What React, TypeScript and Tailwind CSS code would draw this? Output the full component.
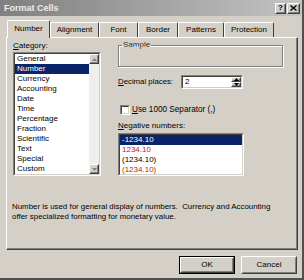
import React from "react";

const FONT = { fontFamily: '"Liberation Sans", Arial, sans-serif' };

function Sunken({ className = "", inner = "", children }: { className?: string; inner?: string; children?: React.ReactNode }) {
  return (
    <div className={`border border-t-[#808080] border-l-[#808080] border-b-white border-r-white ${className}`}>
      <div className={`h-full w-full border border-t-[#404040] border-l-[#404040] border-b-[#d4d0c8] border-r-[#d4d0c8] ${inner}`}>{children}</div>
    </div>
  );
}

function Raised({ className = "", children }: { className?: string; children?: React.ReactNode }) {
  return (
    <div className={`border border-t-white border-l-white border-b-[#404040] border-r-[#404040] bg-[#d4d0c8] ${className}`}>
      <div className="h-full w-full border border-t-[#d4d0c8] border-l-[#d4d0c8] border-b-[#808080] border-r-[#808080] flex items-center justify-center">
        {children}
      </div>
    </div>
  );
}

const Tri = ({ up, color = "#000" }: { up?: boolean; color?: string }) => (
  <svg width="5" height="3" viewBox="0 0 5 3">
    {up ? <path d="M2.5 0 L5 3 L0 3 Z" fill={color} /> : <path d="M0 0 L5 0 L2.5 3 Z" fill={color} />}
  </svg>
);

export default function App() {
  const tabs = [
    { t: "Number", w: 43 },
    { t: "Alignment", w: 49 },
    { t: "Font", w: 39 },
    { t: "Border", w: 40 },
    { t: "Patterns", w: 46 },
    { t: "Protection", w: 50 },
  ];
  const cats = ["General", "Number", "Currency", "Accounting", "Date", "Time", "Percentage", "Fraction", "Scientific", "Text", "Special", "Custom"];
  const negs = [
    { t: "-1234.10", c: "text-white bg-[#0a246a]" },
    { t: "1234.10", c: "text-[#c02020]" },
    { t: "(1234.10)", c: "text-black" },
    { t: "(1234.10)", c: "text-[#c02020]" },
  ];
  return (
    <div className="w-[304px] h-[280px] bg-[#d4d0c8] overflow-hidden text-[8px] leading-[10px] text-black flex flex-col border-r-2 border-b-2 border-r-[#505050] border-b-[#505050]" style={FONT}>
      {/* Title bar */}
      <div className="h-[16px] flex items-center bg-gradient-to-r from-[#808080] to-[#c4c4c4] pl-[4px] pr-[2px] shrink-0">
        <span className="text-[#ececec] font-bold text-[9px]">Format Cells</span>
        <div className="ml-auto flex gap-[1px]">
          <Raised className="w-[11px] h-[11px]">
            <span className="font-bold text-[8px] leading-none">?</span>
          </Raised>
          <Raised className="w-[13px] h-[11px]">
            <svg width="7" height="6" viewBox="0 0 7 6">
              <path d="M0.5 0.5 L6.5 5.5 M6.5 0.5 L0.5 5.5" stroke="#000" strokeWidth="1.4" />
            </svg>
          </Raised>
        </div>
      </div>

      {/* Tabs */}
      <div className="flex items-end h-[17px] mt-[4px] pl-[7px] shrink-0">
        {tabs.map((tab, i) =>
          i === 0 ? (
            <div
              key={tab.t}
              className="relative z-10 -mb-[1px] h-[18px] bg-[#d4d0c8] border-l border-t border-r border-t-white border-l-white border-r-[#404040] rounded-t-[2px] flex items-center justify-center"
              style={{ width: tab.w }}
            >
              <span className="-mt-[1px]">{tab.t}</span>
            </div>
          ) : (
            <div
              key={tab.t}
              className="h-[15px] border-l border-t border-r border-t-white border-l-white border-r-[#404040] rounded-t-[2px] flex items-center justify-center"
              style={{ width: tab.w }}
            >
              {tab.t}
            </div>
          )
        )}
      </div>

      {/* Panel */}
      <div className="ml-[6px] w-[292px] h-[213px] border border-t-white border-l-white border-b-[#404040] border-r-[#404040] shrink-0">
        <div className="h-full w-full border-b border-r border-b-[#808080] border-r-[#808080] flex flex-col">
          <div className="flex">
            {/* Left column */}
            <div className="ml-[6px] w-[88px] flex flex-col">
              <div className="mt-[3px] h-[10px]">
                <span className="underline">C</span>ategory:
              </div>
              <Sunken className="mt-[1px] h-[124px]" inner="bg-white flex">
                <div className="flex-1 flex flex-col">
                  {cats.map((c) => (
                    <div key={c} className={`h-[10px] pl-[2px] ${c === "Number" ? "bg-[#0a246a] text-white" : ""}`}>
                      {c}
                    </div>
                  ))}
                </div>
                <div className="w-[10px] bg-[#efeeea] flex flex-col justify-between">
                  <Raised className="w-[10px] h-[10px]"><Tri up color="#808080" /></Raised>
                  <Raised className="w-[10px] h-[10px]"><Tri color="#808080" /></Raised>
                </div>
              </Sunken>
            </div>

            {/* Right column */}
            <div className="ml-[17px] w-[165px] flex flex-col">
              <fieldset className="mt-[3px] h-[26px] border border-[#808080] shadow-[inset_1px_1px_0_#fff,1px_1px_0_#fff] px-[3px]">
                <legend className="px-[1px] leading-[8px] text-[#303030]">Sample</legend>
              </fieldset>
              <div className="mt-[8px] flex items-center h-[14px]">
                <span className="w-[63px] text-[7.8px]"><span className="underline">D</span>ecimal places:</span>
                <Sunken className="w-[62px] h-[14px]" inner="bg-white flex items-center">
                  <span className="pl-[2px] flex-1">2</span>
                  <div className="w-[10px] h-full flex flex-col">
                    <Raised className="w-[10px] h-[5px]"><Tri up /></Raised>
                    <Raised className="w-[10px] h-[5px]"><Tri /></Raised>
                  </div>
                </Sunken>
              </div>
              <div className="mt-[16px] flex items-center h-[10px]">
                <Sunken className="w-[10px] h-[10px] ml-[2px]" inner="bg-white" />
                <span className="ml-[2px] text-[8.2px]"><span className="underline">U</span>se 1000 Separator (,)</span>
              </div>
              <div className="mt-[6px] h-[10px]">
                <span className="underline">N</span>egative numbers:
              </div>
              <Sunken className="mt-[2px] w-[126px] h-[43px]" inner="bg-white overflow-hidden">
                {negs.map((n, i) => (
                  <div key={i} className={`h-[10px] pl-[2px] ${n.c}`}>{n.t}</div>
                ))}
              </Sunken>
            </div>
          </div>

          <div className="mt-[26px] ml-[5px] whitespace-pre leading-[10px] text-[7.9px]">
            {"Number is used for general display of numbers.  Currency and Accounting\noffer specialized formatting for monetary value."}
          </div>
        </div>
      </div>

      {/* Buttons */}
      <div className="flex mt-[6px] pl-[179px] gap-[6px]">
        <div className="w-[56px] h-[18px] border border-black">
          <Raised className="w-full h-full">OK</Raised>
        </div>
        <Raised className="w-[56px] h-[18px]">Cancel</Raised>
      </div>
    </div>
  );
}
